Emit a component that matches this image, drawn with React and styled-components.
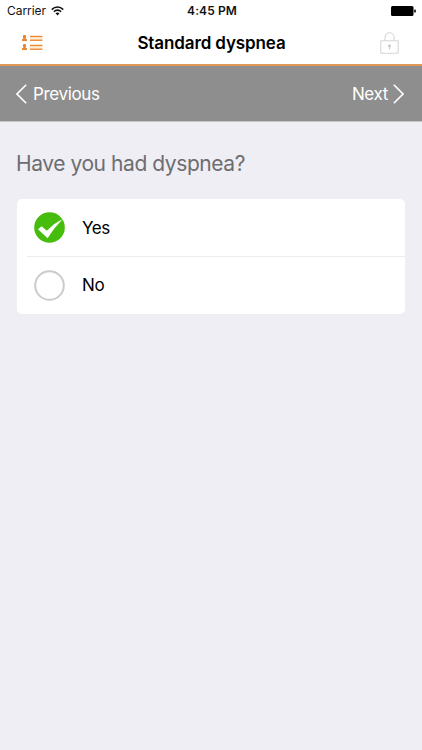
import React, { useState } from 'react'
import styled, { createGlobalStyle } from 'styled-components'

const GlobalStyle=createGlobalStyle`
    body{
        margin: 0;
        background-color: #efeef4;
        font-family: Inter, "Liberation Sans", sans-serif;
    }
`;

const Container=styled.div`
    min-height: 100vh;
    box-sizing: border-box;
    background-color: #efeef4;
`;

const StatusBar=styled.div`
    display: grid;
    grid-template-columns: 1fr auto 1fr;
    align-items: center;
    height: 22px;
    padding: 0 6px 0 7px;
    box-sizing: border-box;
    background-color: white;
    color: #111;
    font-size: 12px;
    line-height: 22px;
`;

const Carrier=styled.div`
    display: flex;
    align-items: center;
    gap: 5px;
    letter-spacing: -0.05px;
`;

const Time=styled.div`
    padding-left: 1px;
    font-weight: 600;
    letter-spacing: 0.1px;
`;

const Battery=styled.div`
    display: flex;
    justify-content: flex-end;
`;

const Header=styled.header`
    display: flex;
    align-items: center;
    justify-content: space-between;
    height: 44px;
    padding: 0 23px 0 22px;
    box-sizing: border-box;
    background-color: white;
    border-bottom: 2px solid #df9656;
`;

const Title=styled.h1`
    margin: 0;
    font-size: 17px;
    font-weight: 600;
    line-height: 43px;
    letter-spacing: -0.12px;
    color: black;
`;

const IconButton=styled.button`
    display: flex;
    padding: 0;
    border: none;
    background: none;
    cursor: pointer;
`;

const Pager=styled.nav`
    display: flex;
    align-items: center;
    justify-content: space-between;
    height: 56px;
    padding: 0 18px 0 16px;
    box-sizing: border-box;
    background-color: #8e8e8e;
    border-bottom: 1px solid #c5c5c8;
`;

const PagerButton=styled.button`
    display: flex;
    align-items: center;
    gap: ${props=>props.$gap};
    padding: 0;
    border: none;
    background: none;
    color: white;
    font-family: inherit;
    font-size: 17px;
    letter-spacing: -0.35px;
    cursor: pointer;
`;

const Question=styled.h2`
    margin: 0;
    padding: 26px 16px 20px;
    font-size: 21px;
    font-weight: 400;
    line-height: 31px;
    letter-spacing: -0.43px;
    color: #6d6d71;
`;

const Card=styled.div`
    margin: 0 17px 0 16.5px;
    background-color: white;
    border-radius: 5px;
    overflow: hidden;
`;

const Option=styled.div`
    display: flex;
    align-items: center;
    gap: 17.5px;
    height: ${props=>props.$height};
    padding-left: 17px;
    font-size: 17px;
    letter-spacing: -0.4px;
    color: black;
    cursor: pointer;
`;

const Divider=styled.div`
    height: 1px;
    margin-left: 10px;
    background-color: #ececee;
`;

const WifiIcon=()=>(
    <svg width="13" height="10" viewBox="0 0 13 10" fill="none" stroke="#111" strokeWidth="1.6">
        <path d="M0.8 3.6C4 0.2 9 0.2 12.2 3.6"/>
        <path d="M2.9 5.7C4.9 3.6 8.1 3.6 10.1 5.7"/>
        <path d="M4.5 7.2C5.6 6.1 7.4 6.1 8.5 7.2L6.5 9.4Z" fill="#111" stroke="none"/>
    </svg>
)

const BatteryIcon=()=>(
    <svg width="25" height="10" viewBox="0 0 25 10">
        <rect x="0" y="0" width="22.5" height="10" rx="1.5" fill="black"/>
        <rect x="23.2" y="3.5" width="1.6" height="3" rx="0.6" fill="black"/>
    </svg>
)

const ListIcon=()=>(
    <svg width="21" height="16" viewBox="0 0 21 16" fill="#ea8532">
        {[0,9].map(y=>(
            <g key={y} transform={`translate(0 ${y})`}>
                <rect x="1" y="0" width="3" height="3.6" rx="0.8"/>
                <path d="M1.5 3H3.5V3.8L5 4.3V6H0V4.3L1.5 3.8Z"/>
                <rect x="8" y="1.5" width="12.4" height="3.5" fill="#fdeccf"/>
                <rect x="8" y="0.8" width="12.4" height="1.3"/>
                <rect x="8" y="4.6" width="12.4" height="1.3"/>
            </g>
        ))}
    </svg>
)

const LockIcon=()=>(
    <svg width="19" height="22" viewBox="0 0 19 22" fill="none" stroke="#d6d6d6" strokeWidth="1.1">
        <rect x="0.8" y="8.8" width="17.4" height="12.4" rx="0.5"/>
        <path d="M5 8.8V5.2a4.5 4.5 0 0 1 9 0V8.8"/>
        <circle cx="9.5" cy="13.8" r="1.4" fill="#c4c4c4" stroke="none"/>
        <path d="M9.5 14V17.2" stroke="#c4c4c4"/>
    </svg>
)

const Chevron=({right})=>(
    <svg width="11" height="20" viewBox="0 0 11 20" fill="none" stroke="white" strokeWidth="1.6">
        <path d={right ? "M0.8 0.8L10 10L0.8 19.2" : "M10.2 0.8L1 10L10.2 19.2"}/>
    </svg>
)

const Radio=({checked})=>(
    <svg width="31" height="31" viewBox="0 0 31 31">
        {checked ? (
            <>
                <circle cx="15.5" cy="15.5" r="15.3" fill="#46bd0c"/>
                <path d="M4 17.2L7.6 14.2L12.8 18.8C17 14.4 21.8 10.4 28.6 7.2C23 13 17.8 19.2 13.6 26.2Z" fill="white"/>
            </>
        ) : (
            <circle cx="15.5" cy="15.5" r="14.3" fill="white" stroke="#cbcbcb" strokeWidth="2"/>
        )}
    </svg>
)

export default function App() {
  const [answer,setAnswer]=useState('Yes')

  return (
    <Container>
        <GlobalStyle/>
        <StatusBar>
            <Carrier>
                Carrier <WifiIcon/>
            </Carrier>
            <Time>4:45 PM</Time>
            <Battery>
                <BatteryIcon/>
            </Battery>
        </StatusBar>
        <Header>
            <IconButton><ListIcon/></IconButton>
            <Title>Standard dyspnea</Title>
            <IconButton><LockIcon/></IconButton>
        </Header>
        <Pager>
            <PagerButton $gap="6px">
                <Chevron/> Previous
            </PagerButton>
            <PagerButton $gap="5px">
                Next <Chevron right/>
            </PagerButton>
        </Pager>
        <Question>Have you had dyspnea?</Question>
        <Card>
            <Option $height="57px" onClick={()=>setAnswer('Yes')}>
                <Radio checked={answer==='Yes'}/> Yes
            </Option>
            <Divider/>
            <Option $height="56.5px" onClick={()=>setAnswer('No')}>
                <Radio checked={answer==='No'}/> No
            </Option>
        </Card>
    </Container>
  )
}
